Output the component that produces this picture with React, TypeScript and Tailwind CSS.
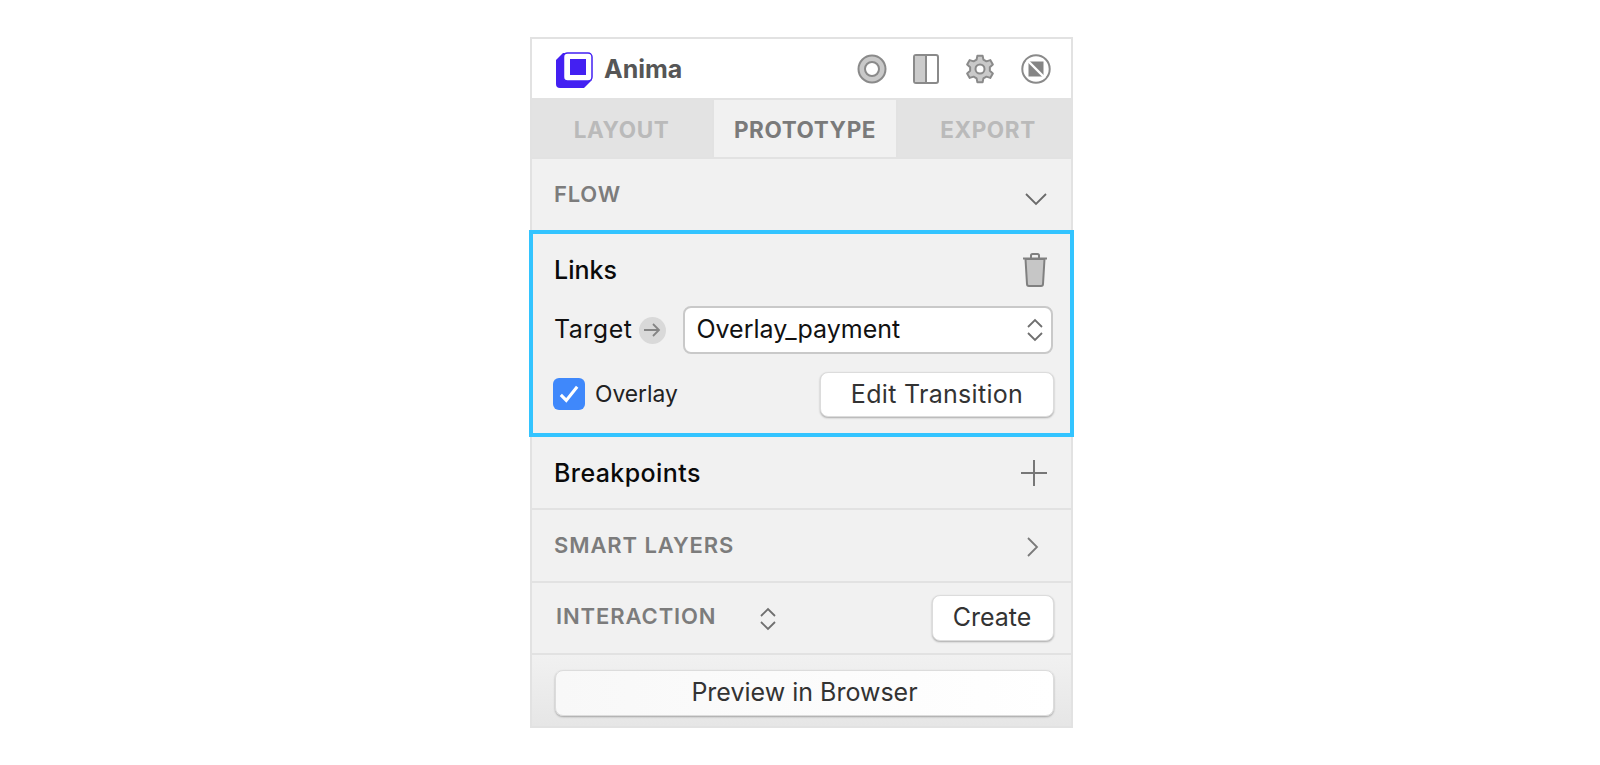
const font = { fontFamily: "Inter, 'Liberation Sans', sans-serif" };

function Logo() {
  return (
    <svg className="mt-[4px]" width="38" height="38" viewBox="0 0 38 38">
      <path d="M8 1 L36 1 L37 28 L29 36 L5 36 Q1 36 1 32 L1 8 Z" fill="#4320f2" />
      <rect x="8.5" y="1" width="28.5" height="28" rx="4" fill="#fff" stroke="#4320f2" strokeWidth="1.5" />
      <rect x="15" y="7" width="16" height="16" fill="#4320f2" />
    </svg>
  );
}

function TargetIcon() {
  return (
    <svg width="30" height="30" viewBox="0 0 30 30">
      <circle cx="15" cy="15" r="13.5" fill="#c9c9c9" stroke="#8a8a8a" strokeWidth="2" />
      <circle cx="15" cy="15" r="7" fill="#fff" stroke="#8a8a8a" strokeWidth="2" />
    </svg>
  );
}

function SplitIcon() {
  return (
    <svg width="26" height="30" viewBox="0 0 26 30">
      <rect x="1" y="1" width="24" height="28" rx="2" fill="#fff" stroke="#8a8a8a" strokeWidth="2" />
      <rect x="2" y="2" width="11" height="26" fill="#cbcbcb" />
      <path d="M13 1 V29" stroke="#8a8a8a" strokeWidth="2" />
    </svg>
  );
}

// six teeth, one pointing straight up
function gearPath() {
  const pts: string[] = [];
  for (let i = 0; i < 6; i++) {
    const a = -90 + i * 60;
    for (const [d, r] of [[-20, 10], [-11, 13.6], [11, 13.6], [20, 10]]) {
      const t = ((a + d) * Math.PI) / 180;
      pts.push(`${(15 + r * Math.cos(t)).toFixed(2)} ${(15 + r * Math.sin(t)).toFixed(2)}`);
    }
  }
  return "M" + pts.join(" L") + " Z";
}

function GearIcon() {
  return (
    <svg width="30" height="30" viewBox="0 0 30 30">
      <path d={gearPath()} fill="#c9c9c9" stroke="#8a8a8a" strokeWidth="2" strokeLinejoin="round" />
      <circle cx="15" cy="15" r="4.5" fill="#fff" stroke="#8a8a8a" strokeWidth="2" />
    </svg>
  );
}

function NoSymbolIcon() {
  return (
    <svg width="30" height="30" viewBox="0 0 30 30">
      <circle cx="15" cy="15" r="13.7" fill="#fff" stroke="#8a8a8a" strokeWidth="2" />
      <rect x="7.5" y="7.5" width="15" height="15" fill="#858585" />
      <path d="M6 6 L24 24" stroke="#fff" strokeWidth="2.4" />
    </svg>
  );
}

function Stepper({ className }: { className?: string }) {
  return (
    <svg className={className} width="18" height="24" viewBox="0 0 18 24" fill="none" stroke="#6f6f6f" strokeWidth="1.8">
      <path d="M2 9 L9 2 L16 9" />
      <path d="M2 15 L9 22 L16 15" />
    </svg>
  );
}

export default function App() {
  return (
    <div className="min-h-[765px] bg-white pt-[37px] pl-[530px]" style={font}>
      <div className="w-[543px] h-[691px] flex flex-col border-2 border-[#e2e2e2] bg-[#f1f1f1]">
        {/* Header */}
        <div className="h-[61px] shrink-0 bg-white flex items-center pl-[23px] pr-[20px] border-b-2 border-[#e2e2e2]">
          <Logo />
          <span className="ml-[11px] mt-[3px] text-[25px] font-bold text-[#565656]">Anima</span>
          <div className="ml-auto flex items-center gap-[26px]">
            <TargetIcon />
            <SplitIcon />
            <GearIcon />
            <NoSymbolIcon />
          </div>
        </div>

        {/* Tabs */}
        <div className="h-[59px] shrink-0 flex border-b-2 border-[#e2e2e2] divide-x-2 divide-[#e2e2e2] font-bold text-[22.5px] tracking-[0.6px]">
          <div className="w-[182px] flex items-center justify-center pr-[1px] pt-[3px] bg-[#e3e3e3] text-[#bababa]">LAYOUT</div>
          <div className="w-[184px] flex items-center justify-center pt-[3px] bg-[#f1f1f1] text-[#7a7a7a]">PROTOTYPE</div>
          <div className="flex-1 flex items-center justify-center pl-[7px] pt-[3px] bg-[#e3e3e3] text-[#bababa]">EXPORT</div>
        </div>

        {/* Flow */}
        <div className="h-[71px] shrink-0 flex items-center justify-between pl-[22px] pr-[23px]">
          <span className="text-[22px] font-semibold tracking-[0.8px] text-[#7c7c7c]">FLOW</span>
          <svg className="mt-[8px]" width="24" height="14" viewBox="0 0 24 14" fill="none" stroke="#6a6a6a" strokeWidth="1.8">
            <path d="M2 2 L12 12 L22 2" />
          </svg>
        </div>

        {/* Links, highlighted */}
        <div className="h-[207px] shrink-0 -mx-[3px] border-4 border-[#33c4ff] bg-[#f1f1f1] pl-[21px] pr-[16px] pt-[20px]">
          <div className="flex items-center justify-between pr-[6px] h-[32px]">
            <span className="text-[25px] font-medium text-[#0a0a0a] mt-[1px]">Links</span>
            <svg width="26" height="34" viewBox="0 0 26 34">
              <path d="M9 5 V2.5 Q9 1 10.5 1 H15.5 Q17 1 17 2.5 V5" fill="none" stroke="#808080" strokeWidth="2" />
              <path d="M1 5.5 H25" stroke="#808080" strokeWidth="2" />
              <path d="M3.5 6 L5 31 Q5 33 7 33 H19 Q21 33 21 31 L22.5 6 Z" fill="#c6c6c6" stroke="#808080" strokeWidth="2" />
            </svg>
          </div>
          <div className="mt-[20px] flex items-center h-[48px]">
            <span className="text-[25px] tracking-[0.5px] text-[#111]">Target</span>
            <span className="ml-[7px] w-[27px] h-[27px] rounded-full bg-[#d9d9d9] flex items-center justify-center">
              <svg width="17" height="14" viewBox="0 0 17 14" fill="none" stroke="#858585" strokeWidth="1.8">
                <path d="M0 7 H15 M9 1 L15 7 L9 13" />
              </svg>
            </span>
            <div className="ml-[17px] w-[370px] h-[48px] rounded-[8px] bg-white border-2 border-[#c9c9c9] flex items-center justify-between pl-[11px] pr-[7px]">
              <span className="text-[25px] text-[#111]">Overlay_payment</span>
              <Stepper />
            </div>
          </div>
          <div className="mt-[18px] flex items-center justify-between h-[45px]">
            <div className="flex items-center">
              <span className="-ml-[1px] -mt-[2px] w-[32px] h-[32px] rounded-[6px] bg-[#3f88fb] flex items-center justify-center">
                <svg width="20" height="20" viewBox="0 0 22 20" fill="none" stroke="#fff" strokeWidth="3.4">
                  <path d="M2 11 L8 17 L20 2" />
                </svg>
              </span>
              <span className="ml-[10px] text-[22.8px] text-[#222]">Overlay</span>
            </div>
            <button className="w-[234px] h-[45px] rounded-[8px] bg-white border border-[#dcdcdc] shadow-[0_1px_2px_rgba(0,0,0,0.3)] text-[25px] tracking-[0.3px] text-[#333]">
              Edit Transition
            </button>
          </div>
        </div>

        {/* Breakpoints */}
        <div className="h-[73px] shrink-0 flex items-center justify-between pl-[22px] pr-[24px] border-b-2 border-[#e2e2e2]">
          <span className="text-[25px] font-medium tracking-[0.4px] text-[#0a0a0a] mt-[2px]">Breakpoints</span>
          <svg width="26" height="26" viewBox="0 0 26 26" stroke="#777" strokeWidth="2">
            <path d="M0 13 H26 M13 0 V26" />
          </svg>
        </div>

        {/* Smart layers */}
        <div className="h-[73px] shrink-0 flex items-center justify-between pl-[22px] pr-[32px] border-b-2 border-[#e2e2e2]">
          <span className="text-[22px] font-semibold tracking-[0.9px] text-[#7c7c7c]">SMART LAYERS</span>
          <svg className="mt-[2px]" width="13" height="22" viewBox="0 0 13 22" fill="none" stroke="#7a7a7a" strokeWidth="1.8">
            <path d="M2 2 L11 11 L2 20" />
          </svg>
        </div>

        {/* Interaction */}
        <div className="h-[72px] shrink-0 flex items-center pl-[24px] pr-[17px] border-b-2 border-[#e2e2e2]">
          <span className="text-[22px] font-semibold tracking-[0.9px] text-[#7c7c7c] -mt-[3px]">INTERACTION</span>
          <Stepper className="ml-[43px] mt-[2px]" />
          <button className="ml-auto w-[122px] h-[46px] rounded-[8px] bg-white border border-[#dcdcdc] shadow-[0_1px_2px_rgba(0,0,0,0.3)] text-[25px] text-[#333] pr-[2px]">
            Create
          </button>
        </div>

        {/* Preview */}
        <div className="flex-1 bg-gradient-to-b from-[#f1f1f1] to-[#e6e6e6] pl-[23px] pr-[17px] pt-[15px]">
          <button className="w-full h-[46px] rounded-[8px] bg-gradient-to-r from-[#f8f8f8] to-white border border-[#dcdcdc] shadow-[0_1px_2px_rgba(0,0,0,0.3)] text-[25px] text-[#333]">
            Preview in Browser
          </button>
        </div>
      </div>
    </div>
  );
}
